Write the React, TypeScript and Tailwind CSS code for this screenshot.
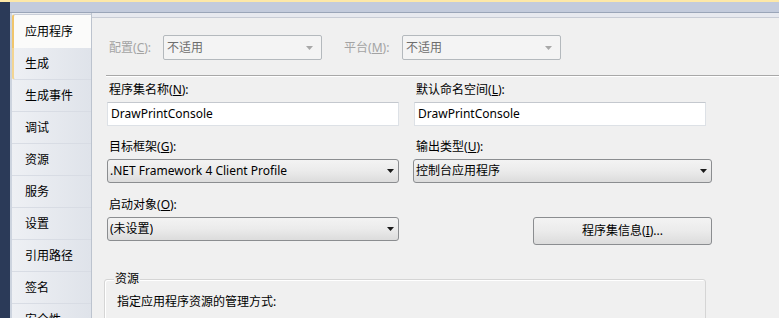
import React from 'react';

const tabs = ['生成', '生成事件', '调试', '资源', '服务', '设置', '引用路径', '签名', '安全性'];

function Key({ k }: { k: string }) {
  return (
    <>
      (<u>{k}</u>)
    </>
  );
}

function Arrow({ muted }: { muted?: boolean }) {
  return (
    <svg width="7" height="4" viewBox="0 0 7 4" className="shrink-0">
      <path d="M0 0h7L3.5 4z" fill={muted ? '#a8a8a8' : '#1a1a1a'} />
    </svg>
  );
}

function DisabledSelect({ value }: { value: string }) {
  return (
    <div className="w-[159px] h-[25px] flex items-center justify-between pl-[3px] pr-[8px] bg-[#f4f4f4] border border-[#b4b9bd] rounded-[2px] text-[#6d6d6d]">
      <span>{value}</span>
      <Arrow muted />
    </div>
  );
}

function Combo({ value, w }: { value: string; w: string }) {
  return (
    <div
      className={`${w} h-[24px] flex items-center justify-between pl-[2px] pr-[4px] rounded-[3px] border border-[#8b8d90] bg-gradient-to-b from-[#f3f3f3] via-[#ebebeb] to-[#dcdcdc]`}
    >
      <span className="truncate">{value}</span>
      <Arrow />
    </div>
  );
}

function TextBox({ value }: { value: string }) {
  return (
    <div className="w-[292px] h-[24px] flex items-center pl-[3px] bg-white border border-[#dde1e6] border-t-[#c4c8ce]">
      {value}
    </div>
  );
}

function Label({ children }: { children: React.ReactNode }) {
  return <div className="h-[17px] leading-[17px] pl-[2px] mb-[4px]">{children}</div>;
}

export default function App() {
  return (
    <div className="w-[779px] h-[318px] overflow-hidden flex flex-col bg-[#2b3a58] text-[12px] text-black font-[family-name:'Noto_Sans','Noto_Sans_CJK_SC',sans-serif]">
      <div className="h-[2px] shrink-0 bg-[#fde8a8]" />
      <div className="flex flex-1 min-h-0">
        <div className="w-[10px] shrink-0 bg-[#2b3a58]" />
        <div className="flex-1 flex flex-col bg-[#cdd4df]">
          <div className="h-[11px] shrink-0 bg-[#c3cbdc] border-b border-[#9aa5b8]" />
          <div className="flex flex-1 min-h-0 pl-[2px]">
            {/* tab list */}
            <div className="w-[80px] shrink-0 overflow-hidden flex flex-col border-r border-[#bcc3ce] bg-gradient-to-r from-[#eef0f4] to-[#dfe3ea]">
              <div className="relative z-10 shrink-0 mt-[1px] h-[34px] flex items-center pl-[11px] bg-[#fbfbfa] border-l-2 border-t border-l-[#f1c66c] border-t-[#c9ced8] rounded-tl-[3px]">
                应用程序
              </div>
              {tabs.map((t, i) => (
                <div
                  key={t}
                  className={`h-[32px] shrink-0 flex items-center border-b border-[#d8dce4] ${
                    i === 0 ? 'border-l-2 border-l-[#f3d592] pl-[11px] rounded-bl-[3px]' : 'pl-[13px]'
                  }`}
                >
                  {t}
                </div>
              ))}
            </div>

            {/* property page */}
            <div className="flex-1 min-w-0 flex flex-col bg-[#f0f0f0]">
              <div className="h-[5px] shrink-0 bg-[#e7e9ef] border-b border-[#c8ccd5]" />

              <div className="flex items-center mt-[17px] pl-[15px]">
                <div className="w-[56px] pl-[2px] text-[#a3a3a3]">
                  配置<Key k="C" />:
                </div>
                <DisabledSelect value="不适用" />
                <div className="w-[58px] ml-[22px] text-[#a3a3a3]">
                  平台<Key k="M" />:
                </div>
                <DisabledSelect value="不适用" />
              </div>

              <div className="mt-[15px] ml-[14px] h-[2px] shrink-0 border-t border-[#a8a8a8] border-b border-b-white" />

              <div className="flex pl-[15px] mt-[4px]">
                <div className="w-[292px] flex flex-col">
                  <div>
                    <Label>
                      程序集名称<Key k="N" />:
                    </Label>
                    <TextBox value="DrawPrintConsole" />
                  </div>
                  <div className="mt-[12px]">
                    <Label>
                      目标框架<Key k="G" />:
                    </Label>
                    <Combo w="w-[292px]" value=".NET Framework 4 Client Profile" />
                  </div>
                  <div className="mt-[13px]">
                    <Label>
                      启动对象<Key k="O" />:
                    </Label>
                    <Combo w="w-[292px]" value="(未设置)" />
                  </div>
                </div>
                <div className="ml-[14px] flex flex-col">
                  <div className="pl-[1px]">
                    <Label>
                      默认命名空间<Key k="L" />:
                    </Label>
                    <TextBox value="DrawPrintConsole" />
                  </div>
                  <div className="mt-[12px]">
                    <div className="pl-[1px]">
                      <Label>
                        输出类型<Key k="U" />:
                      </Label>
                    </div>
                    <Combo w="w-[299px]" value="控制台应用程序" />
                  </div>
                  <div className="mt-[13px] pt-[21px] pl-[120px]">
                    <div className="w-[179px] h-[28px] flex items-center justify-center rounded-[3px] border border-[#8b8d90] bg-gradient-to-b from-[#f3f3f3] via-[#ebebeb] to-[#dcdcdc]">
                      程序集信息<Key k="I" />...
                    </div>
                  </div>
                </div>
              </div>

              <div className="relative shrink-0 ml-[12px] mt-[34px] w-[602px] h-[60px] border border-[#d5d5d5] rounded-[3px] shadow-[inset_1px_1px_0_#ffffff]">
                <div className="absolute -top-[9px] left-[9px] px-[1px] bg-[#f0f0f0] leading-[16px]">资源</div>
                <div className="pt-[13px] pl-[12px]">指定应用程序资源的管理方式:</div>
              </div>
            </div>
          </div>
        </div>
      </div>
    </div>
  );
}
